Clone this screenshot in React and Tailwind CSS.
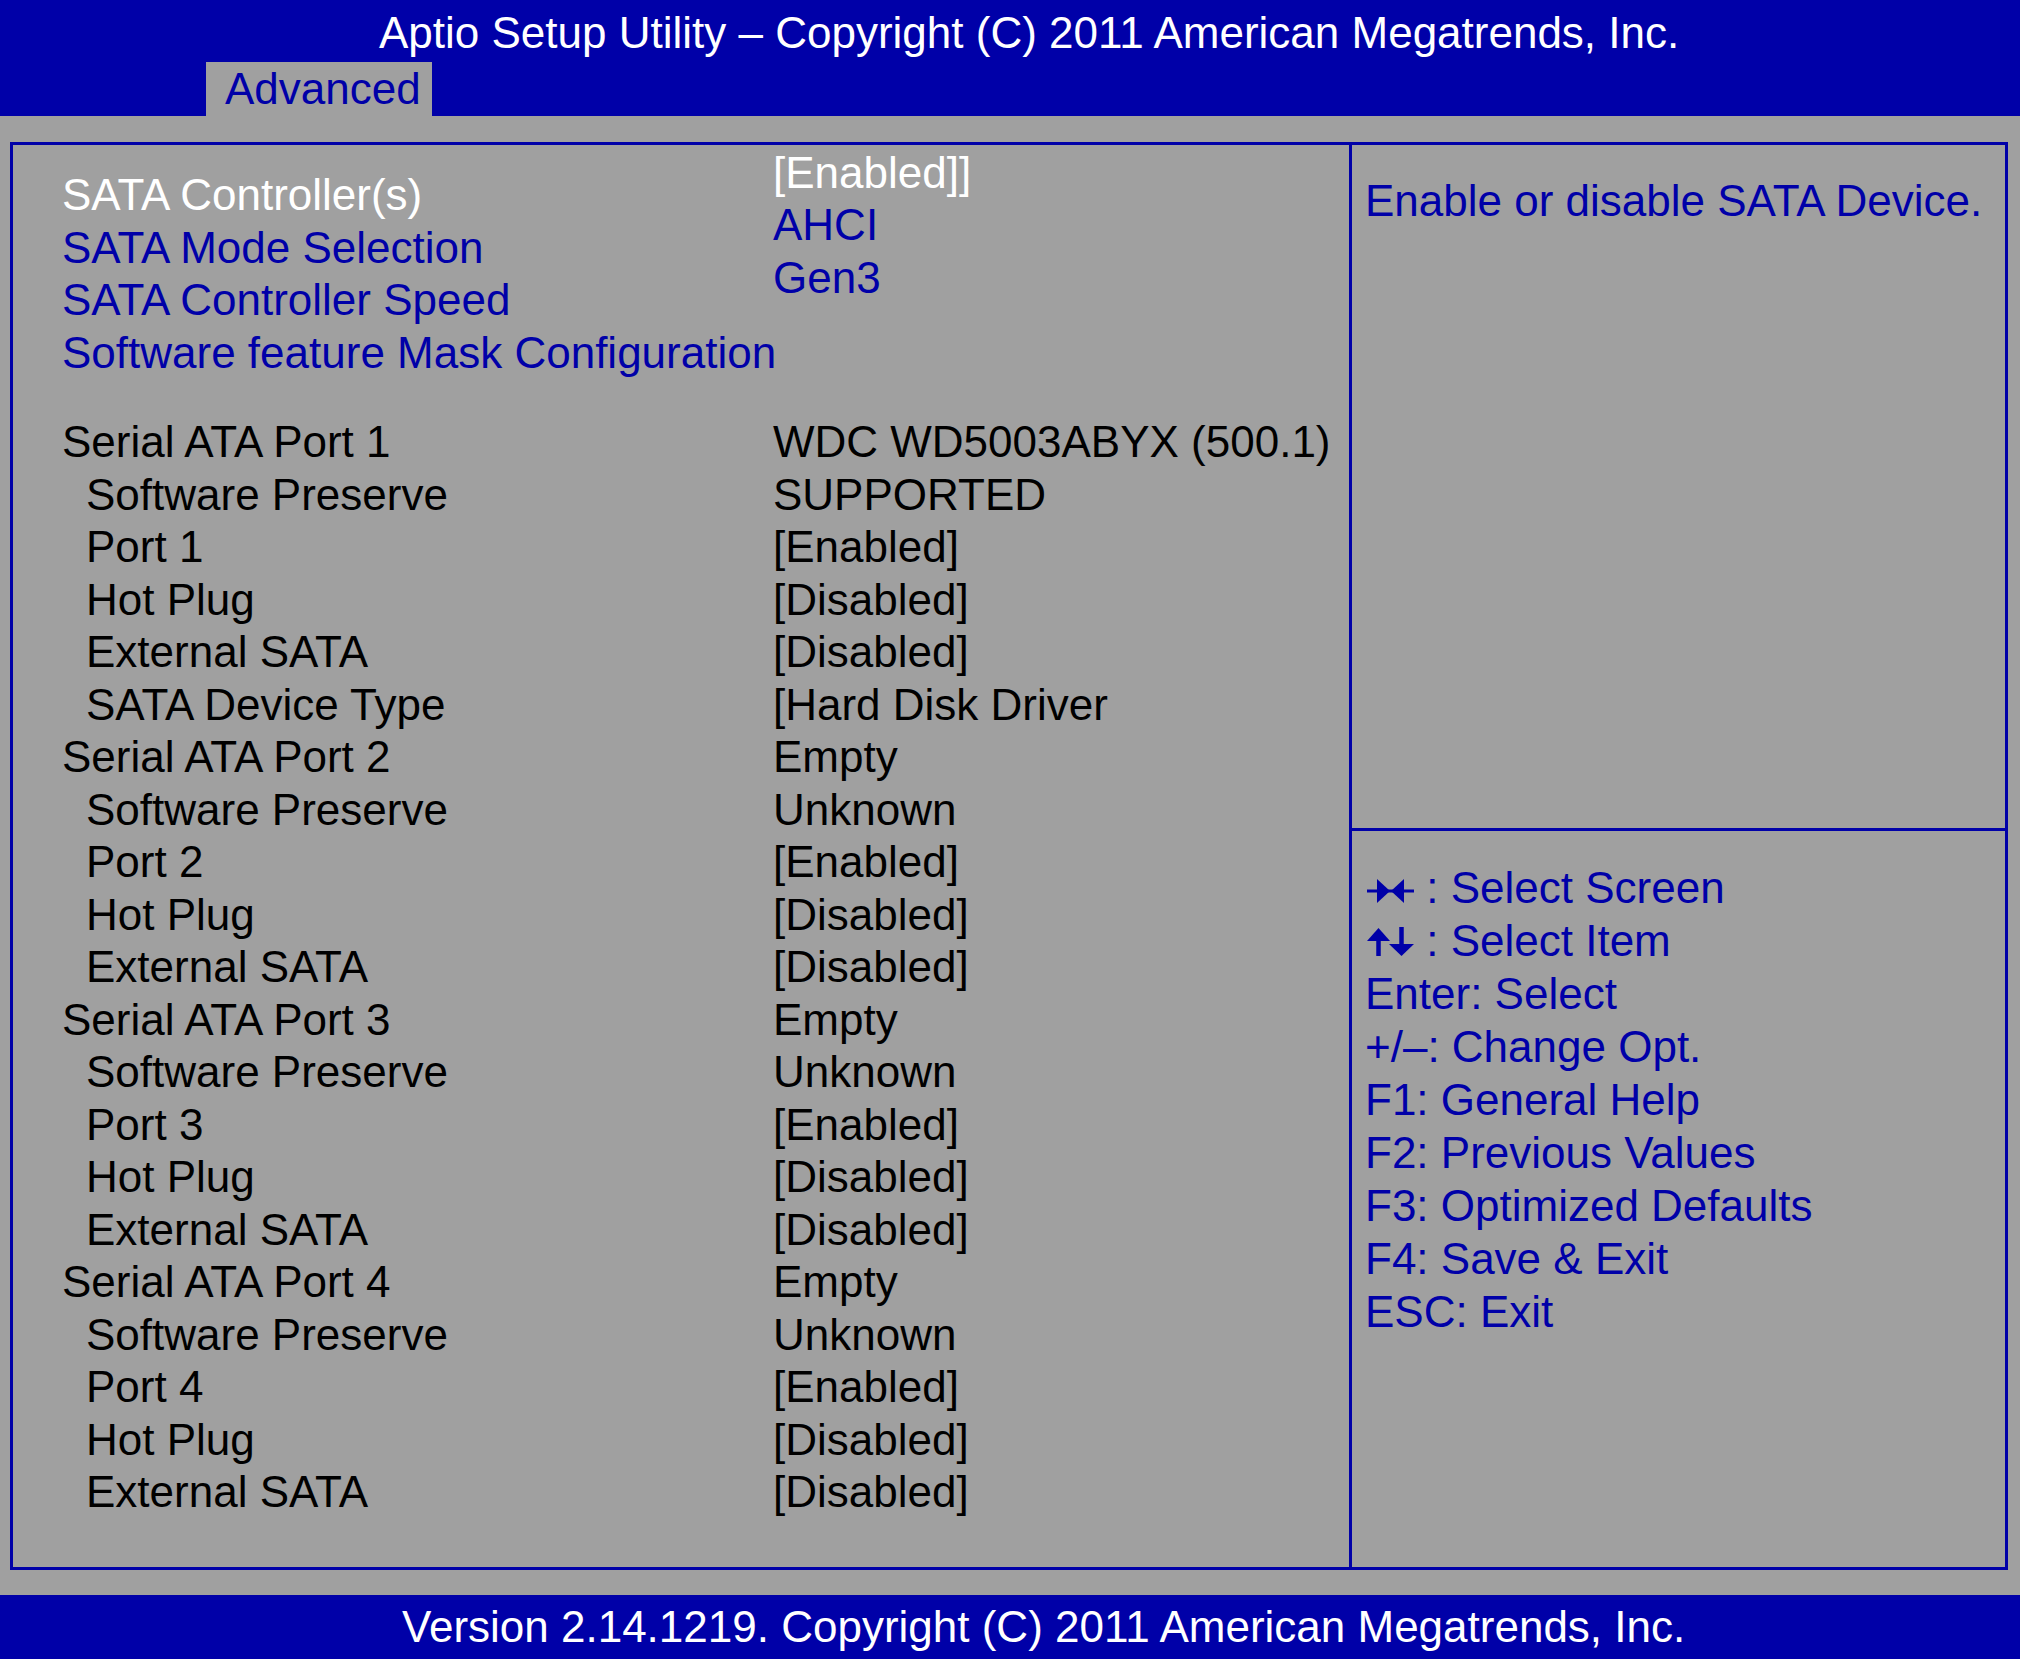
import React from 'react'

// Aptio BIOS "Advanced" page: SATA configuration

const topItems = [
  { label: 'SATA Controller(s)', value: '[Enabled]]', active: true },
  { label: 'SATA Mode Selection', value: 'AHCI' },
  { label: 'SATA Controller Speed', value: 'Gen3' },
  { label: 'Software feature Mask Configuration' },
]

function portGroup(n, value) {
  return [
    { label: `Serial ATA Port ${n}`, value },
    { label: 'Software Preserve', value: 'Unknown', indent: true },
    { label: `Port ${n}`, value: '[Enabled]', indent: true },
    { label: 'Hot Plug', value: '[Disabled]', indent: true },
    { label: 'External SATA', value: '[Disabled]', indent: true },
  ]
}

const portRows = [
  { label: 'Serial ATA Port 1', value: 'WDC WD5003ABYX (500.1)' },
  { label: 'Software Preserve', value: 'SUPPORTED', indent: true },
  { label: 'Port 1', value: '[Enabled]', indent: true },
  { label: 'Hot Plug', value: '[Disabled]', indent: true },
  { label: 'External SATA', value: '[Disabled]', indent: true },
  { label: 'SATA Device Type', value: '[Hard Disk Driver', indent: true },
  ...portGroup(2, 'Empty'),
  ...portGroup(3, 'Empty'),
  ...portGroup(4, 'Empty'),
]

function ScreenArrows() {
  return (
    <svg width="47" height="31" viewBox="0 0 47 31" className="inline-block align-baseline" aria-hidden>
      <line x1="0" y1="19" x2="47" y2="19" stroke="#0000a8" strokeWidth="3" />
      <polygon points="10,7 23,19 10,31" fill="#0000a8" />
      <polygon points="37,7 24,19 37,31" fill="#0000a8" />
    </svg>
  )
}

function ItemArrows() {
  return (
    <svg width="47" height="31" viewBox="0 0 47 31" className="inline-block align-baseline" aria-hidden>
      <line x1="11.5" y1="14" x2="11.5" y2="31" stroke="#0000a8" strokeWidth="4.5" />
      <polygon points="0,16 11.5,3 23,16" fill="#0000a8" />
      <line x1="34.5" y1="2" x2="34.5" y2="21" stroke="#0000a8" strokeWidth="4.5" />
      <polygon points="22,19 34.5,31 47,19" fill="#0000a8" />
    </svg>
  )
}

const helpLines = [
  'Enter: Select',
  '+/–: Change Opt.',
  'F1: General Help',
  'F2: Previous Values',
  'F3: Optimized Defaults',
  'F4: Save & Exit',
  'ESC: Exit',
]

export default function App() {
  return (
    <div className="w-[2020px] h-[1659px] overflow-hidden bg-[#a0a0a0] flex flex-col font-['Liberation_Sans',Arial,sans-serif] text-[44px]">
      <header className="h-[116px] bg-[#0000a8] pt-[7px]">
        <div className="pl-[379px] leading-[52px] text-white whitespace-nowrap">
          Aptio Setup Utility – Copyright (C) 2011 American Megatrends, Inc.
        </div>
        <div className="mt-[3px] ml-[206px] w-[226px] h-[54px] bg-[#a0a0a0] pl-[19px] leading-[54px] text-[#0000a8]">
          Advanced
        </div>
      </header>

      <main className="mt-[26px] ml-[10px] w-[1998px] h-[1428px] border-[3px] border-[#0000a8] flex">
        <section className="w-[1339px] border-r-[3px] border-[#0000a8] pl-[49px] leading-[52.5px] whitespace-nowrap">
          <div className="flex">
            <div className="w-[711px] pt-[24px]">
              {topItems.map((it) => (
                <div key={it.label} className={it.active ? 'text-white' : 'text-[#0000a8]'}>
                  {it.label}
                </div>
              ))}
            </div>
            <div className="pt-[1.5px]">
              {topItems
                .filter((it) => it.value)
                .map((it) => (
                  <div key={it.value} className={it.active ? 'text-white' : 'text-[#0000a8]'}>
                    {it.value}
                  </div>
                ))}
            </div>
          </div>

          <div className="mt-[37px] text-black">
            {portRows.map((row, i) => (
              <div key={i} className="flex">
                <div className={row.indent ? 'w-[711px] pl-[24px]' : 'w-[711px]'}>{row.label}</div>
                <div>{row.value}</div>
              </div>
            ))}
          </div>
        </section>

        <aside className="flex-1 flex flex-col text-[#0000a8] whitespace-nowrap">
          <div className="h-[686px] border-b-[3px] border-[#0000a8] pt-[30px] pl-[13px] leading-[52.5px]">
            Enable or disable SATA Device.
          </div>
          <div className="pt-[30px] pl-[15px] leading-[53px]">
            <div>
              <ScreenArrows /> : Select Screen
            </div>
            <div>
              <ItemArrows /> : Select Item
            </div>
            {helpLines.map((line) => (
              <div key={line} className="-ml-[2px]">{line}</div>
            ))}
          </div>
        </aside>
      </main>

      <footer className="mt-[25px] h-[64px] bg-[#0000a8] pl-[402px] leading-[64px] text-white whitespace-nowrap">
        Version 2.14.1219. Copyright (C) 2011 American Megatrends, Inc.
      </footer>
    </div>
  )
}
